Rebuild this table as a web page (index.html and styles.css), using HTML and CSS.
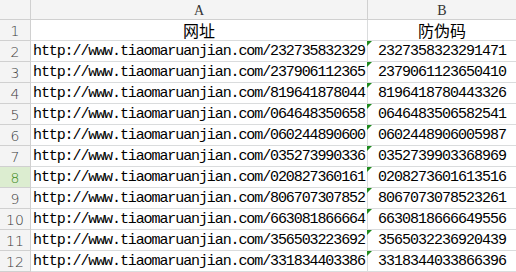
FILE: index.html
```html
<!DOCTYPE html>
<html>
<head>
<meta charset="utf-8">
<link rel="stylesheet" href="styles.css">
</head>
<body>
<div class="sheet">
  <div class="corner"></div>
  <div class="colhead">A</div>
  <div class="colhead last">B</div>

  <div class="rowhead">1</div>
  <div class="cell title">网址</div>
  <div class="cell title b">防伪码</div>

  <div class="rowhead">2</div>
  <div class="cell url">http://www.tiaomaruanjian.com/232735832329</div>
  <div class="cell code"><span class="flag"></span>2327358323291471</div>

  <div class="rowhead">3</div>
  <div class="cell url">http://www.tiaomaruanjian.com/237906112365</div>
  <div class="cell code"><span class="flag"></span>2379061123650410</div>

  <div class="rowhead">4</div>
  <div class="cell url">http://www.tiaomaruanjian.com/819641878044</div>
  <div class="cell code"><span class="flag"></span>8196418780443326</div>

  <div class="rowhead">5</div>
  <div class="cell url">http://www.tiaomaruanjian.com/064648350658</div>
  <div class="cell code"><span class="flag"></span>0646483506582541</div>

  <div class="rowhead">6</div>
  <div class="cell url">http://www.tiaomaruanjian.com/060244890600</div>
  <div class="cell code"><span class="flag"></span>0602448906005987</div>

  <div class="rowhead">7</div>
  <div class="cell url">http://www.tiaomaruanjian.com/035273990336</div>
  <div class="cell code"><span class="flag"></span>0352739903368969</div>

  <div class="rowhead active">8</div>
  <div class="cell url">http://www.tiaomaruanjian.com/020827360161</div>
  <div class="cell code"><span class="flag"></span>0208273601613516</div>

  <div class="rowhead">9</div>
  <div class="cell url">http://www.tiaomaruanjian.com/806707307852</div>
  <div class="cell code"><span class="flag"></span>8067073078523261</div>

  <div class="rowhead">10</div>
  <div class="cell url">http://www.tiaomaruanjian.com/663081866664</div>
  <div class="cell code"><span class="flag"></span>6630818666649556</div>

  <div class="rowhead">11</div>
  <div class="cell url">http://www.tiaomaruanjian.com/356503223692</div>
  <div class="cell code"><span class="flag"></span>3565032236920439</div>

  <div class="rowhead">12</div>
  <div class="cell url">http://www.tiaomaruanjian.com/331834403386</div>
  <div class="cell code"><span class="flag"></span>3318344033866396</div>
</div>
</body>
</html>
```

FILE: styles.css
```css
html, body {
  margin: 0;
  padding: 0;
  background: #ffffff;
  overflow: hidden;
}

.sheet {
  display: grid;
  grid-template-columns: 31px 337px 148px;
  grid-template-rows: 20px repeat(12, 21px);
  width: 516px;
}

.sheet > div {
  box-sizing: border-box;
  border-right: 1px solid #dadcdd;
  border-bottom: 1px solid #dadcdd;
  white-space: nowrap;
}

.corner,
.colhead {
  background: #f4f4f4;
  border-color: #d0d0d0 !important;
}

.colhead {
  font-family: "Liberation Serif", serif;
  font-size: 14px;
  line-height: 17px;
  padding-top: 2px;
  text-align: center;
  color: #333333;
}

.colhead.last {
  border-right: none !important;
}

.rowhead {
  background: #f4f4f4;
  border-color: #d0d0d0 !important;
  font-family: "DejaVu Sans", sans-serif;
  font-weight: 300;
  font-size: 14px;
  line-height: 18px;
  padding-top: 2px;
  text-align: center;
  color: #3a3a3a;
}

.rowhead.active {
  background: #dcedd0;
  color: #3d8a22;
}

.cell {
  position: relative;
  color: #000000;
}

.title {
  font-family: "Noto Sans CJK SC", sans-serif;
  font-size: 16px;
  line-height: 20px;
  text-align: center;
}

.url,
.code {
  font-family: "Liberation Mono", monospace;
  font-size: 15px;
  line-height: 18px;
  padding-top: 2px;
}

.url {
  overflow: hidden;
  letter-spacing: -1.1px;
  padding-left: 2px;
  text-align: left;
}

.code {
  letter-spacing: -1px;
  text-align: center;
}

.b,
.code {
  border-right: none !important;
}

.flag {
  position: absolute;
  top: 0;
  left: -1px;
  width: 0;
  height: 0;
  border-top: 5px solid #1f8a1f;
  border-right: 5px solid transparent;
}
```
